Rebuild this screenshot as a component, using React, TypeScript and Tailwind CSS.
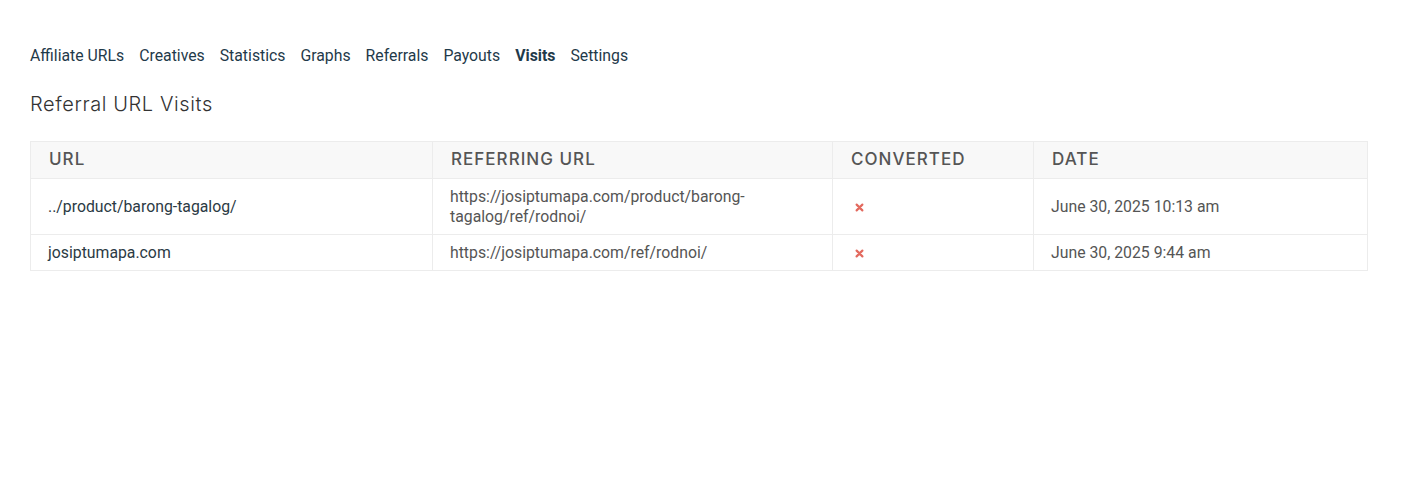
const tabs = ["Affiliate URLs", "Creatives", "Statistics", "Graphs", "Referrals", "Payouts", "Visits", "Settings"];

const rows = [
  {
    url: "../product/barong-tagalog/",
    ref: "https://josiptumapa.com/product/barong-tagalog/ref/rodnoi/",
    date: "June 30, 2025 10:13 am",
  },
  {
    url: "josiptumapa.com",
    ref: "https://josiptumapa.com/ref/rodnoi/",
    date: "June 30, 2025 9:44 am",
  },
];

function Cross() {
  return (
    <svg width="9" height="9" viewBox="0 0 10 10" className="ml-[5px] inline-block">
      <path d="M1.8 1.8 L8.2 8.2 M8.2 1.8 L1.8 8.2" stroke="#e36a5f" strokeWidth="2.4" strokeLinecap="round" />
    </svg>
  );
}

export default function App() {
  const head = "font-['Inter',sans-serif] text-[17px] font-medium uppercase tracking-[0.06em] text-[#555] text-left px-[18px] py-0 h-[37px] border border-[#ececec]";
  const cell = "px-[17px] py-[7.5px] border border-[#ececec] align-middle leading-[20px]";
  return (
    <div className="min-h-screen bg-white pl-[30px] pr-[34px] pt-[45px] font-['Roboto',sans-serif]">
      <nav className="flex gap-[15px] text-[15.8px] leading-[22px] text-[#1f3a4a]">
        {tabs.map((t) => (
          <span key={t} className={t === "Visits" ? "font-bold" : ""}>
            {t}
          </span>
        ))}
      </nav>
      <h2 className="mt-[24px] font-['Inter',sans-serif] text-[20px] font-light tracking-[0.03em] leading-[26px] text-[#333]">
        Referral URL Visits
      </h2>
      <table className="mt-[24px] w-[1337px] border-collapse table-fixed text-[15.8px]">
        <colgroup>
          <col className="w-[402px]" />
          <col className="w-[400px]" />
          <col className="w-[201px]" />
          <col className="w-[334px]" />
        </colgroup>
        <thead>
          <tr className="bg-[#f8f8f8]">
            <th className={head}>URL</th>
            <th className={head}>Referring URL</th>
            <th className={head}>Converted</th>
            <th className={head}>Date</th>
          </tr>
        </thead>
        <tbody>
          {rows.map((r) => (
            <tr key={r.url}>
              <td className={cell + " text-[#2b3a44]"}>{r.url}</td>
              <td className={cell + " text-[#555] pr-[60px]"}>{r.ref}</td>
              <td className={cell}>
                <Cross />
              </td>
              <td className={cell + " text-[#555]"}>{r.date}</td>
            </tr>
          ))}
        </tbody>
      </table>
    </div>
  );
}
